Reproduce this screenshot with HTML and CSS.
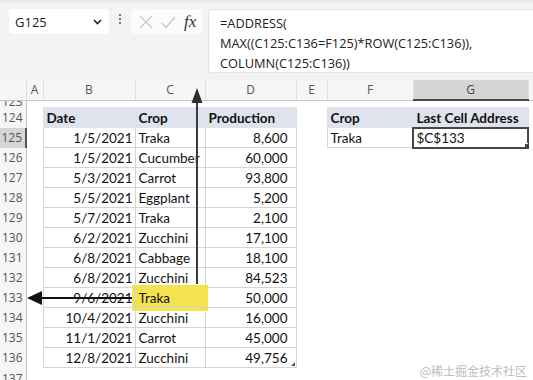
FILE: index.html
```html
<!DOCTYPE html>
<html lang="en">
<head>
    <meta charset="UTF-8">
    <meta name="viewport" content="width=device-width, initial-scale=1.0">
    <title>Last Cell Address</title>
    <link rel="stylesheet" href="styles.css">
</head>
<body>
    <!-- 编辑栏 -->
    <div class="toolbar">
        <div class="name-box">
            <span>G125</span>
            <svg class="chevron" width="9" height="6" viewBox="0 0 9 6"><path d="M1 1 L4.5 4.5 L8 1" fill="none" stroke="#222" stroke-width="1.6"/></svg>
        </div>
        <div class="dots"><i></i><i></i><i></i></div>
        <div class="fx-box">
            <svg width="16" height="16" viewBox="0 0 16 16"><path d="M2 2 L14 14 M14 2 L2 14" stroke="#c9c9c9" stroke-width="1.3"/></svg>
            <svg width="16" height="16" viewBox="0 0 16 16"><path d="M1.5 9 L6 13.5 L15 3" fill="none" stroke="#c9c9c9" stroke-width="1.3"/></svg>
            <span class="fx">fx</span>
        </div>
        <div class="formula">
            <div>=ADDRESS(</div>
            <div>MAX((C125:C136=F125)*ROW(C125:C136)),</div>
            <div>COLUMN(C125:C136))</div>
        </div>
    </div>

    <!-- 工作表 -->
    <div class="sheet">
        <table class="grid">
            <colgroup>
                <col style="width:26px"><col style="width:17px"><col style="width:92px"><col style="width:70px">
                <col style="width:91px"><col style="width:31px"><col style="width:86px"><col style="width:115px"><col>
            </colgroup>
            <tr class="col-head">
                <th class="corner"></th><th>A</th><th>B</th><th>C</th><th>D</th><th>E</th><th>F</th><th class="sel">G</th><th class="last"></th>
            </tr>
            <tr class="partial">
                <td class="rh"><div class="cut top">123</div></td><td colspan="8"></td>
            </tr>
            <tr>
                <td class="rh">124</td><td></td>
                <td class="th">Date</td><td class="th">Crop</td><td class="th">Production</td>
                <td></td><td class="th">Crop</td><td class="th">Last Cell Address</td><td></td>
            </tr>
            <tr>
                <td class="rh sel">125</td><td></td>
                <td class="c num">1/5/2021</td><td class="c">Traka</td><td class="c num">8,600</td>
                <td></td><td class="c">Traka</td><td class="c active">$C$133<i class="handle"></i></td><td></td>
            </tr>
            <tr><td class="rh">126</td><td></td><td class="c num">1/5/2021</td><td class="c">Cucumber</td><td class="c num">60,000</td><td colspan="4"></td></tr>
            <tr><td class="rh">127</td><td></td><td class="c num">5/3/2021</td><td class="c">Carrot</td><td class="c num">93,800</td><td colspan="4"></td></tr>
            <tr><td class="rh">128</td><td></td><td class="c num">5/5/2021</td><td class="c">Eggplant</td><td class="c num">5,200</td><td colspan="4"></td></tr>
            <tr><td class="rh">129</td><td></td><td class="c num">5/7/2021</td><td class="c">Traka</td><td class="c num">2,100</td><td colspan="4"></td></tr>
            <tr><td class="rh">130</td><td></td><td class="c num">6/2/2021</td><td class="c">Zucchini</td><td class="c num">17,100</td><td colspan="4"></td></tr>
            <tr><td class="rh">131</td><td></td><td class="c num">6/8/2021</td><td class="c">Cabbage</td><td class="c num">18,100</td><td colspan="4"></td></tr>
            <tr><td class="rh">132</td><td></td><td class="c num">6/8/2021</td><td class="c">Zucchini</td><td class="c num">84,523</td><td colspan="4"></td></tr>
            <tr><td class="rh">133</td><td></td><td class="c num">9/6/2021</td><td class="c hl">Traka</td><td class="c num">50,000</td><td colspan="4"></td></tr>
            <tr><td class="rh">134</td><td></td><td class="c num">10/4/2021</td><td class="c">Zucchini</td><td class="c num">16,000</td><td colspan="4"></td></tr>
            <tr><td class="rh">135</td><td></td><td class="c num">11/1/2021</td><td class="c">Carrot</td><td class="c num">45,000</td><td colspan="4"></td></tr>
            <tr><td class="rh">136</td><td></td><td class="c num">12/8/2021</td><td class="c">Zucchini</td><td class="c num end">49,756<i class="resize"></i></td><td colspan="4"></td></tr>
            <tr class="partial">
                <td class="rh"><div class="cut bottom">137</div></td><td colspan="8"></td>
            </tr>
        </table>

        <!-- 箭头标注 -->
        <svg class="arrows" width="533" height="300" viewBox="0 0 533 300">
            <line x1="197" y1="204" x2="197" y2="20" stroke="#3b3b3b" stroke-width="2"/>
            <polygon points="197,8 191.5,23 202.5,23" fill="#2e2e2e"/>
            <line x1="132" y1="218" x2="40" y2="218" stroke="#111" stroke-width="2"/>
            <polygon points="27,218 42,211 42,225" fill="#111"/>
        </svg>

        <div class="watermark">@稀土掘金技术社区</div>
    </div>
</body>
</html>
```

FILE: styles.css
```css
/* 页面布局 */
body {
    margin: 0;
    width: 533px;
    height: 380px;
    overflow: hidden;
    background-color: #fff;
    font-family: "Open Sans", Arial, sans-serif;
}

/* 编辑栏 */
.toolbar {
    display: flex;
    align-items: flex-start;
    height: 80px;
    padding: 9px 0 0 9px;
    box-sizing: border-box;
    background-color: #f3f3f3;
    border-top: 3px solid #e9e9e9;
}

.name-box {
    display: flex;
    align-items: center;
    justify-content: space-between;
    width: 100px;
    height: 25px;
    margin-top: -3px;
    padding: 0 7px 0 6px;
    box-sizing: border-box;
    background-color: #fff;
    border-radius: 4px;
    font-size: 13px;
    color: #222;
}

.dots {
    display: flex;
    flex-direction: column;
    align-items: center;
    gap: 2px;
    width: 22px;
    padding-top: 5px;
    margin-top: -3px;
}

.dots i {
    width: 2px;
    height: 2px;
    background-color: #555;
    border-radius: 50%;
}

.fx-box {
    display: flex;
    align-items: center;
    gap: 6px;
    width: 72px;
    height: 25px;
    margin-top: -3px;
    padding: 0 5px 0 7px;
    box-sizing: border-box;
    background-color: #fbfbfb;
    border-radius: 4px;
}

.fx {
    margin-left: 2px;
    font-family: "Liberation Serif", serif;
    font-style: italic;
    font-size: 17px;
    color: #333;
}

.formula {
    flex: 1;
    height: 64px;
    margin: -3px 0 0 5px;
    padding: 3px 11px;
    box-sizing: border-box;
    background-color: #fff;
    border: 1px solid #e4e4e4;
    border-right: none;
    border-radius: 4px 0 0 4px;
    font-size: 12.8px;
    line-height: 20px;
    color: #222;
}

/* 工作表 */
.sheet {
    position: relative;
}

.grid {
    table-layout: fixed;
    width: 533px;
    border-collapse: collapse;
    font-family: Lato, "Open Sans", sans-serif;
    font-size: 13.5px;
    color: #111;
}

.grid td,
.grid th {
    height: 20px;
    padding: 0 3px;
    white-space: nowrap;
    overflow: hidden;
    box-sizing: border-box;
}

.col-head th {
    height: 20px;
    background-color: #f6f6f6;
    border-bottom: 1px solid #c6c6c6;
    border-right: 1px solid #dedede;
    font-family: "Open Sans", sans-serif;
    font-weight: normal;
    font-size: 12px;
    color: #555;
    text-align: center;
}

.col-head th.sel {
    background-color: #d5d5d5;
    border-bottom: 2px solid #4a4a4a;
    color: #444;
}

.col-head th.last {
    border-right: none;
}

.rh {
    background-color: #f6f6f6;
    border-right: 1px solid #c6c6c6;
    font-family: "Open Sans", sans-serif;
    font-size: 12px;
    color: #555;
    text-align: right;
}

.grid td.rh {
    padding: 0 3px 0 0;
}

.rh.sel {
    background-color: #d6d6d6;
    border-right: 2px solid #555;
}

.grid .partial td {
    height: 6px;
}

.cut {
    height: 6px;
    overflow: hidden;
    line-height: 12px;
}

.cut.top {
    line-height: 0;
    padding-top: 1px;
}

.cut.bottom {
    height: 13px;
    line-height: 22px;
}

/* 表格单元格 */
.th {
    background-color: #dfe3ec;
    border: 1px solid #dfe3ec;
    font-weight: bold;
}

.c {
    border: 1px solid #d4d4d4;
}

.num {
    text-align: right;
}

.grid td.num {
    padding-right: 2px;
}

.grid td:nth-child(5).num {
    padding-right: 8px;
}

.hl {
    background-color: #f3e34e;
    outline: 3px solid #f3e34e;
}

.active {
    position: relative;
    outline: 2px solid #474747;
    outline-offset: -1px;
    overflow: visible;
}

.handle {
    position: absolute;
    right: -3px;
    bottom: -3px;
    width: 5px;
    height: 5px;
    background-color: #474747;
    border: 1px solid #fff;
}

.end {
    position: relative;
}

.resize {
    position: absolute;
    right: 1px;
    bottom: 1px;
    width: 0;
    height: 0;
    border-left: 4px solid transparent;
    border-bottom: 4px solid #555;
}

/* 箭头与水印 */
.arrows {
    position: absolute;
    top: 0;
    left: 0;
    pointer-events: none;
}

.watermark {
    position: absolute;
    right: 6px;
    top: 282px;
    font-family: "Noto Sans CJK SC", sans-serif;
    font-size: 12px;
    color: #bdbdbd;
}
```
